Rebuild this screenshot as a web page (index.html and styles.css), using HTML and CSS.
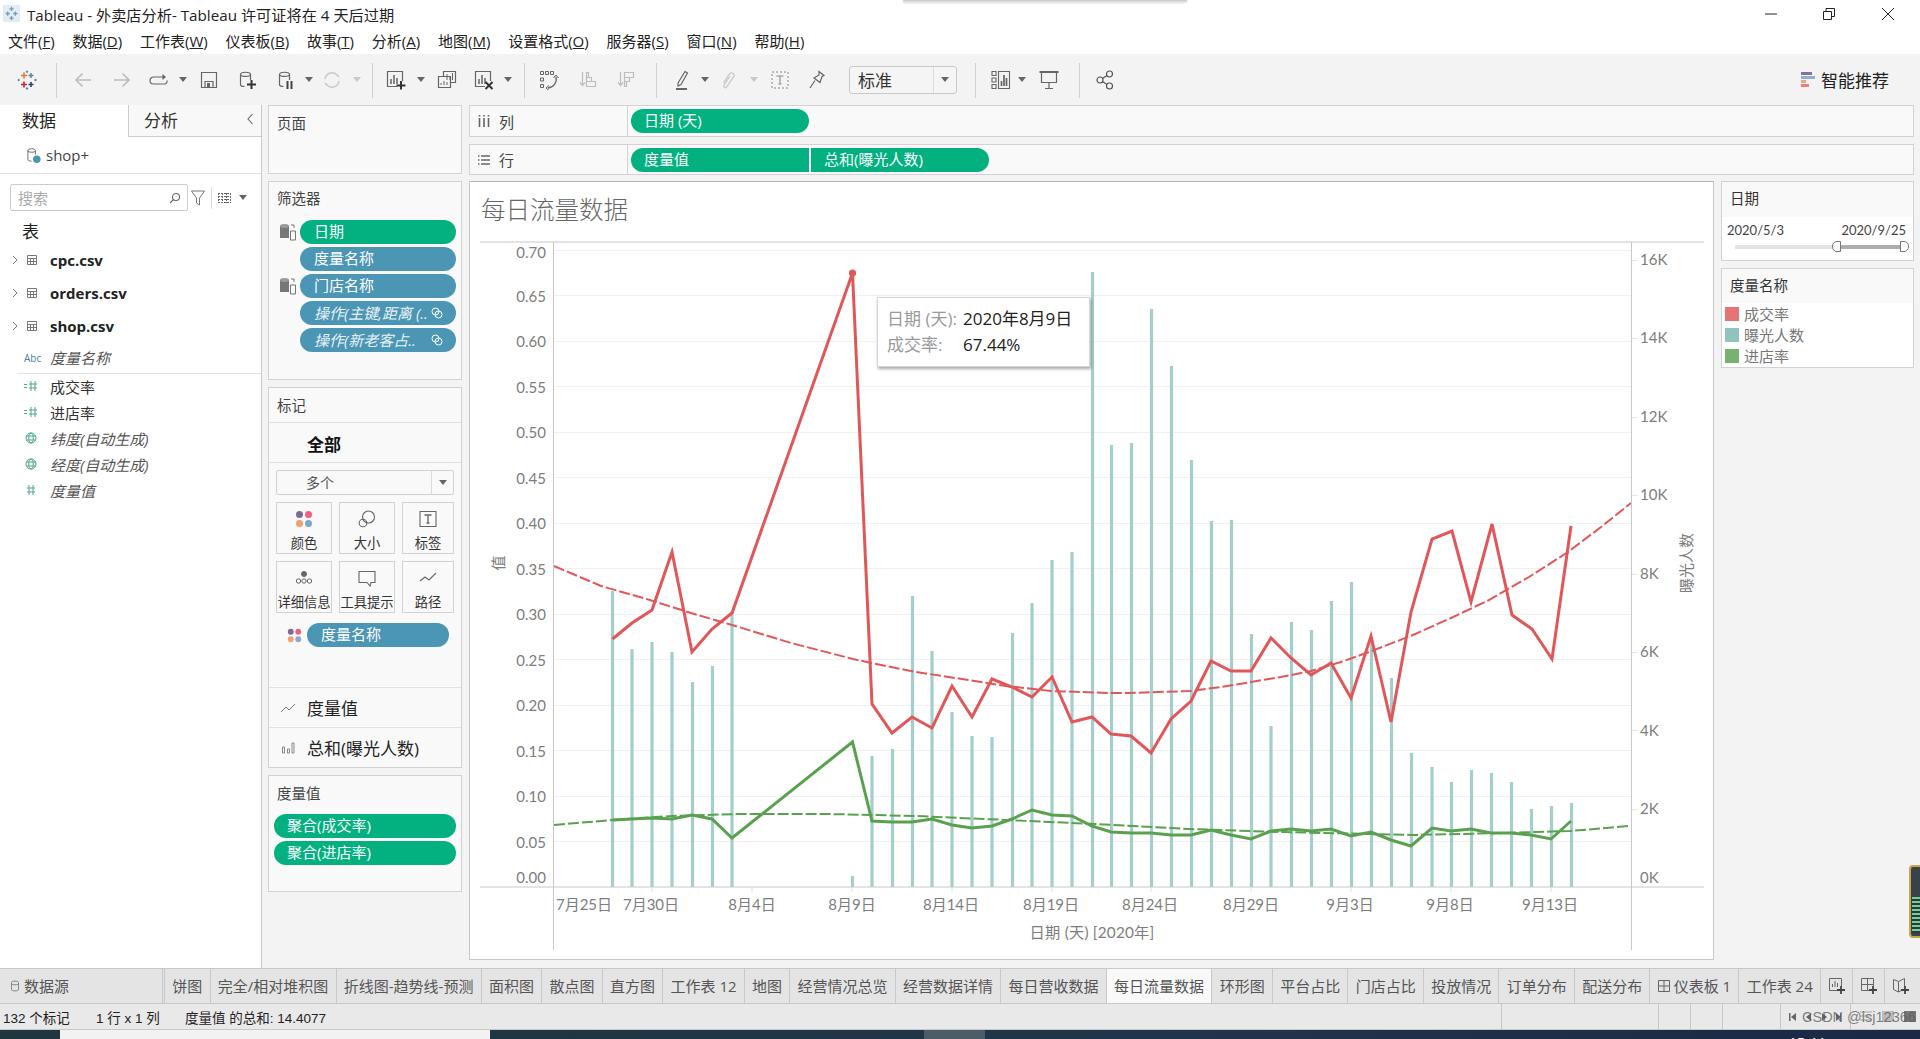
FILE: index.html
```html
<!DOCTYPE html>
<html lang="zh">
<head>
<meta charset="utf-8">
<title>Tableau - 外卖店分析</title>
<link rel="stylesheet" href="styles.css">
</head>
<body>
<div class="app">
  <div class="top-shadow"></div>
  <header class="titlebar">
    <svg class="app-icon" viewBox="0 0 20 20"><rect width="20" height="20" fill="#e3ecf3"/><path d="M10 2v5M7.500 4.500h5M10 13v5M7.500 15.500h5M3 10h5M5.500 7.500v5M12 10h5M14.500 7.500v5" stroke="#6d9cc4" stroke-width="1.500" fill="none"/></svg>
    <span class="title-text">Tableau - 外卖店分析- Tableau 许可证将在 4 天后过期</span>
    <div class="win-btns">
      <svg class="win-min" viewBox="0 0 12 12"><path d="M0 6h12" stroke="#222"/></svg>
      <svg class="win-max" viewBox="0 0 12 12"><path d="M.5 3.500h8v8h-8zM3 3.500V.5h8.500v8H8.500" fill="none" stroke="#222"/></svg>
      <svg class="win-close" viewBox="0 0 12 12"><path d="M0 0l12 12M12 0L0 12" stroke="#222"/></svg>
    </div>
  </header>
  <nav class="menubar">
    <span>文件(<u>F</u>)</span><span>数据(<u>D</u>)</span><span>工作表(<u>W</u>)</span><span>仪表板(<u>B</u>)</span><span>故事(<u>T</u>)</span><span>分析(<u>A</u>)</span><span>地图(<u>M</u>)</span><span>设置格式(<u>O</u>)</span><span>服务器(<u>S</u>)</span><span>窗口(<u>N</u>)</span><span>帮助(<u>H</u>)</span>
  </nav>

  <div class="toolbar">
    <svg class="ti" viewBox="0 0 20 20" fill="none" stroke-width="1.600"><path d="M7 2.500v6M4 5.500h6" stroke="#e8762d"/><path d="M14 3v5M11.500 5.500h5" stroke="#5b879b"/><path d="M7 11.500v6M4 14.500h6" stroke="#c72037"/><path d="M14 12v5M11.500 14.500h5" stroke="#1f447a"/><path d="M10 .5v2.500M8.800 1.700h2.400M10 17v3M8.800 18.500h2.400M1.500 8.800v2.400M.5 10h2.500M18.500 8.800v2.400M17 10h3" stroke="#5b879b" stroke-width="1"/></svg>
    <i class="sep"></i>
    <svg class="ti" viewBox="0 0 20 20" fill="none" stroke="#bdbdbd" stroke-width="1.700"><path d="M18 10H3M9.500 3.500L3 10l6.500 6.500"/></svg>
    <svg class="ti" viewBox="0 0 20 20" fill="none" stroke="#bdbdbd" stroke-width="1.700"><path d="M2 10h15M10.500 3.500L17 10l-6.500 6.500"/></svg>
    <svg class="ti" viewBox="0 0 20 20" fill="none" stroke="#666" stroke-width="1.200"><path d="M15 7H4.500a3.200 3.200 0 0 0 0 7h11a2.800 2.800 0 0 0 2.500-3.500"/><path d="M13.500 4l3.500 3-3.500 3z" fill="#666" stroke="none"/></svg>
    <i class="caret"></i>
    <svg class="ti" viewBox="0 0 20 20" fill="none" stroke="#666" stroke-width="1.200"><path d="M2.500 2.500h15v15h-15z"/><path d="M6 17V11.500h8V17" /><path d="M8 13h3v4H8z" fill="#666" stroke="none"/></svg>
    <svg class="ti" viewBox="0 0 20 20" fill="none" stroke="#666" stroke-width="1.200"><path d="M3.500 4.500c0-3 10-3 10 0V10M3.500 4.500v10c0 1.500 2 2 4 2M3.500 4.500c0 2.500 10 2.500 10 0"/><path d="M14.500 10v9M10 14.500h9" stroke="#333" stroke-width="2"/></svg>
    <svg class="ti" viewBox="0 0 20 20" fill="none" stroke="#666" stroke-width="1.200"><path d="M3.500 4.500c0-3 10-3 10 0V10M3.500 4.500v10c0 1.500 2 2 4 2M3.500 4.500c0 2.500 10 2.500 10 0"/><path d="M11.500 11v8M15.500 11v8" stroke="#444" stroke-width="2"/></svg>
    <i class="caret"></i>
    <svg class="ti" viewBox="0 0 20 20" fill="none" stroke="#c9c9c9" stroke-width="1.500"><path d="M3 9a7 7 0 0 1 12-4l2 2M17 11a7 7 0 0 1-12 4l-2-2"/></svg>
    <i class="caret pale"></i>
    <i class="sep"></i>
    <svg class="ti" viewBox="0 0 20 20" fill="none" stroke="#666" stroke-width="1.200"><path d="M11 16.500H1.500v-15h15V11"/><path d="M5 14V9M8 14V5M11 14V8" stroke-width="1.500"/><path d="M15 11v8.500M10.500 15.500h9" stroke="#333" stroke-width="2"/></svg>
    <i class="caret"></i>
    <svg class="ti" viewBox="0 0 20 20" fill="none" stroke="#666" stroke-width="1.200"><path d="M6.500 6V1.500h12v11H14"/><path d="M1.500 6.500h12v11h-12z" fill="#f3f3f3"/><path d="M4 15v-2M7 15v-4M10 15v-3M10 10V4M13 10V6M15.500 10V3" stroke-width="1"/></svg>
    <svg class="ti" viewBox="0 0 20 20" fill="none" stroke="#666" stroke-width="1.200"><path d="M11 16.500H1.500v-15h15V11"/><path d="M5 14V9M8 14V5M11 14V8" stroke-width="1.500"/><path d="M11.500 12l7 7M18.500 12l-7 7" stroke="#333" stroke-width="2"/></svg>
    <i class="caret"></i>
    <i class="sep"></i>
    <svg class="ti" viewBox="0 0 20 20" fill="none" stroke="#666" stroke-width="1"><path d="M1.500 1.500h3v3h-3zM6.500 1.500h3v3h-3zM11.500 1.500h3v3h-3zM1.500 8h3v3h-3zM1.500 14.500h3v3h-3z"/><path d="M17 7a9 9 0 0 1-8 11" stroke-width="1.300"/><path d="M14.500 8L17 5l2.500 3M10 15.500L7 18l3 2.500"/></svg>
    <svg class="ti" viewBox="0 0 20 20" fill="none" stroke="#bdbdbd" stroke-width="1.200"><path d="M3.500 2v13M1 12.500l2.500 3 2.500-3M7.500 2.500h2v5h-2zM7.500 7.500h5v4h-5zM7.500 11.500h9v5h-9z"/></svg>
    <svg class="ti" viewBox="0 0 20 20" fill="none" stroke="#bdbdbd" stroke-width="1.200"><path d="M3.500 2v13M1 12.500l2.500 3 2.500-3M7.500 2.500h9v5h-9zM7.500 7.500h5v4h-5zM7.500 11.500h2v5h-2z"/></svg>
    <i class="sep"></i>
    <svg class="ti" viewBox="0 0 20 20" fill="none" stroke="#666" stroke-width="1.200"><path d="M5 13L12 1.500l2.500 1.500L8 14.500l-3 1.500z"/><path d="M3 19h11" stroke-width="2"/></svg>
    <i class="caret"></i>
    <svg class="ti" viewBox="0 0 20 20" fill="none" stroke="#c9c9c9" stroke-width="1.300"><path d="M4.500 13l6-9a2.500 2.500 0 0 1 4 3l-7 10a1.500 1.500 0 0 1-2.500-2l6-9"/></svg>
    <i class="caret pale"></i>
    <svg class="ti" viewBox="0 0 20 20" fill="none" stroke="#888" stroke-width="1"><path d="M2 2h16v16H2z" stroke-dasharray="2 2"/><path d="M6.500 6h7M10 6v8M8.500 14h3"/></svg>
    <svg class="ti" viewBox="0 0 20 20" fill="none" stroke="#666" stroke-width="1.200"><path d="M12 1.500l5 4-2 1-2 6-6-4.500 5-3zM8 10.500L3 18"/></svg>
    <div class="fit-select"><span>标准</span><b><i class="caret"></i></b></div>
    <i class="sep"></i>
    <svg class="ti" viewBox="0 0 20 20" fill="none" stroke="#666" stroke-width="1.100"><path d="M1 1.500h4v4H1zM1 8h4v4H1zM1 14.500h4v4H1zM7.500 1.500h11v17h-11z"/><path d="M10.500 16V11M13 16V5M15.500 16V8" stroke-width="1.700"/></svg>
    <i class="caret"></i>
    <svg class="ti" viewBox="0 0 20 20" fill="none" stroke="#666" stroke-width="1.200"><path d="M.5 2h19" stroke-width="2"/><path d="M2.500 2v10.500h15V2M10 12.500V18M6 18.500h8"/></svg>
    <i class="sep"></i>
    <svg class="ti" viewBox="0 0 20 20" fill="none" stroke="#555" stroke-width="1.200"><circle cx="5" cy="10" r="3"/><circle cx="14.500" cy="4" r="3"/><circle cx="14.500" cy="16" r="3"/><path d="M7.500 8.500l4.500-3M7.500 11.500l4.500 3"/></svg>
    <span class="spacer"></span>
    <div class="smart">
      <svg class="smart-ic" viewBox="0 0 14 15"><rect width="11" height="3" fill="#8a6f9e"/><rect y="4" width="14" height="3" fill="#8fb0d6"/><rect y="8" width="5" height="3" fill="#f2a67e"/><rect y="12" width="8" height="3" fill="#f47b84"/></svg>
      <span>智能推荐</span>
    </div>
  </div>

  <main class="main">
    <aside class="data-pane">
      <div class="pane-tabs"><div class="pane-tab active">数据</div><div class="pane-tab">分析<svg class="chev" viewBox="0 0 8 12"><path d="M6.500 1L2 6l4.500 5" fill="none" stroke="#666" stroke-width="1.100"/></svg></div></div>
      <div class="source">
        <svg class="src-ic" viewBox="0 0 16 18" fill="none"><path d="M2 4c0-3 8-3 8 0v4M2 4v9c0 1.500 2 2 4 2M2 4c0 2 8 2 8 0" stroke="#666"/><circle cx="11.500" cy="13" r="4" fill="#4b96b4"/></svg>
        <span>shop+</span>
      </div>
      <div class="search-row">
        <div class="search"><span>搜索</span><svg class="mag" viewBox="0 0 12 12" fill="none" stroke="#666" stroke-width="1.100"><circle cx="7" cy="5" r="3.500"/><path d="M4.500 7.500L1 11"/></svg></div>
        <svg class="funnel" viewBox="0 0 14 16" fill="none" stroke="#777"><path d="M.5 1h13L8.500 8v7l-3-2V8z"/></svg>
        <i class="vline"></i>
        <svg class="gridic" viewBox="0 0 13 10" fill="none" stroke="#666"><path d="M0 .5h13M0 3.500h13M0 6.500h13M0 9.500h13M.5 0v10M4.500 0v10M8.500 0v10M12.500 0v10" stroke-dasharray="2 1"/></svg>
        <i class="caret"></i>
      </div>
      <div class="tbl-head">表</div>
      <ul class="tables">
        <li><svg class="exp" viewBox="0 0 6 10"><path d="M1 1l4 4-4 4" fill="none" stroke="#777"/></svg><svg class="tic" viewBox="0 0 10 10" fill="none" stroke="#777"><path d="M.5.500h9v9h-9zM.5 3.500h9M.5 6.500h9M3.500 3.500v6M6.500 3.500v6"/></svg><b>cpc.csv</b></li>
        <li><svg class="exp" viewBox="0 0 6 10"><path d="M1 1l4 4-4 4" fill="none" stroke="#777"/></svg><svg class="tic" viewBox="0 0 10 10" fill="none" stroke="#777"><path d="M.5.500h9v9h-9zM.5 3.500h9M.5 6.500h9M3.500 3.500v6M6.500 3.500v6"/></svg><b>orders.csv</b></li>
        <li><svg class="exp" viewBox="0 0 6 10"><path d="M1 1l4 4-4 4" fill="none" stroke="#777"/></svg><svg class="tic" viewBox="0 0 10 10" fill="none" stroke="#777"><path d="M.5.500h9v9h-9zM.5 3.500h9M.5 6.500h9M3.500 3.500v6M6.500 3.500v6"/></svg><b>shop.csv</b></li>
      </ul>
      <div class="field dim-field"><span class="abc">Abc</span><em>度量名称</em></div>
      <div class="field"><svg class="fic" viewBox="0 0 16 12" fill="none" stroke="#4ca78a"><path d="M1 4.500h3M1 7.500h3M8 1v10M12 1v10M6 4h8M6 8h8"/></svg><span>成交率</span></div>
      <div class="field"><svg class="fic" viewBox="0 0 16 12" fill="none" stroke="#4ca78a"><path d="M1 4.500h3M1 7.500h3M8 1v10M12 1v10M6 4h8M6 8h8"/></svg><span>进店率</span></div>
      <div class="field"><svg class="fic" viewBox="0 0 16 12" fill="none" stroke="#4ca78a"><circle cx="8" cy="6" r="5"/><ellipse cx="8" cy="6" rx="2.200" ry="5"/><path d="M3 4h10M3 8h10"/></svg><em>纬度(自动生成)</em></div>
      <div class="field"><svg class="fic" viewBox="0 0 16 12" fill="none" stroke="#4ca78a"><circle cx="8" cy="6" r="5"/><ellipse cx="8" cy="6" rx="2.200" ry="5"/><path d="M3 4h10M3 8h10"/></svg><em>经度(自动生成)</em></div>
      <div class="field"><svg class="fic" viewBox="0 0 16 12" fill="none" stroke="#4ca78a"><path d="M6 1v10M10 1v10M4 4h8M4 8h8"/></svg><em>度量值</em></div>
    </aside>

    <section class="side">
      <div class="card pages"><h4>页面</h4></div>
      <div class="card filters">
        <h4>筛选器</h4>
        <div class="filter-row"><svg class="dbi" viewBox="0 0 17 18"><path d="M1 3h9v12H1z" fill="#777"/><ellipse cx="5.500" cy="3" rx="4.500" ry="2" fill="#999"/><path d="M11.500 8h5v9h-5z" fill="#f9f9f9" stroke="#777"/><path d="M12 2h3v3" fill="none" stroke="#777"/></svg><div class="pill green">日期</div></div>
        <div class="filter-row"><div class="pill blue">度量名称</div></div>
        <div class="filter-row"><svg class="dbi" viewBox="0 0 17 18"><path d="M1 3h9v12H1z" fill="#777"/><ellipse cx="5.500" cy="3" rx="4.500" ry="2" fill="#999"/><path d="M11.500 8h5v9h-5z" fill="#f9f9f9" stroke="#777"/><path d="M12 2h3v3" fill="none" stroke="#777"/></svg><div class="pill blue">门店名称</div></div>
        <div class="filter-row"><div class="pill blue ital"><em>操作(主键,距离 (..</em><svg class="link" viewBox="0 0 12 12" fill="none" stroke="#fff"><circle cx="4.500" cy="4.500" r="3.500"/><circle cx="7.500" cy="7.500" r="3.500"/></svg></div></div>
        <div class="filter-row"><div class="pill blue ital"><em>操作(新老客占..</em><svg class="link" viewBox="0 0 12 12" fill="none" stroke="#fff"><circle cx="4.500" cy="4.500" r="3.500"/><circle cx="7.500" cy="7.500" r="3.500"/></svg></div></div>
      </div>
      <div class="card marks">
        <h4 class="marks-h">标记</h4>
        <div class="marks-all">全部</div>
        <div class="mark-select"><span>多个</span><b><i class="caret"></i></b></div>
        <div class="mark-btns">
          <div class="mbtn"><svg viewBox="0 0 18 18"><circle cx="4.500" cy="4.500" r="3.500" fill="#7f6a96"/><circle cx="13.500" cy="4.500" r="3.500" fill="#f0607a"/><circle cx="4.500" cy="13.500" r="3.500" fill="#f2a06d"/><circle cx="13.500" cy="13.500" r="3.500" fill="#7fa4d2"/></svg><span>颜色</span></div>
          <div class="mbtn"><svg viewBox="0 0 18 18" fill="none" stroke="#666" stroke-width="1.100"><circle cx="10.500" cy="7" r="6"/><circle cx="5" cy="13" r="3.800"/></svg><span>大小</span></div>
          <div class="mbtn"><svg viewBox="0 0 18 18" fill="none" stroke="#666" stroke-width="1.100"><path d="M1 1.500h16v15H1z"/><path d="M5.500 5h7M9 5v8M7.500 13h3" stroke-width="1.300"/></svg><span>标签</span></div>
          <div class="mbtn"><svg viewBox="0 0 18 18" fill="none" stroke="#666"><circle cx="9" cy="5" r="2.500" fill="#666"/><circle cx="3.500" cy="12" r="2.200"/><circle cx="9" cy="12" r="2.200"/><circle cx="14.500" cy="12" r="2.200"/></svg><span>详细信息</span></div>
          <div class="mbtn"><svg viewBox="0 0 18 18" fill="none" stroke="#666" stroke-width="1.100"><path d="M1 2.500h16v11h-4l-1 3.500-3-3.500H1z"/></svg><span>工具提示</span></div>
          <div class="mbtn"><svg viewBox="0 0 18 18" fill="none" stroke="#666" stroke-width="1.100"><path d="M1 12l5-4 4 3 7-7"/></svg><span>路径</span></div>
        </div>
        <div class="color-row"><svg class="dots" viewBox="0 0 18 18"><circle cx="4.500" cy="4.500" r="3.500" fill="#7f6a96"/><circle cx="13.500" cy="4.500" r="3.500" fill="#f0607a"/><circle cx="4.500" cy="13.500" r="3.500" fill="#f2a06d"/><circle cx="13.500" cy="13.500" r="3.500" fill="#8fa8d0"/></svg><div class="pill blue wide">度量名称</div></div>
        <div class="mark-type first"><svg viewBox="0 0 16 12" fill="none" stroke="#777"><path d="M1 10l5-5 3 3 6-6"/></svg><span>度量值</span></div>
        <div class="mark-type"><svg viewBox="0 0 16 12" fill="none" stroke="#888"><path d="M2.500 5h2v6h-2zM7.500 7h2v4h-2zM12 1h2v10h-2z"/></svg><span>总和(曝光人数)</span></div>
      </div>
      <div class="card values">
        <h4>度量值</h4>
        <div class="pill green val">聚合(成交率)</div>
        <div class="pill green val">聚合(进店率)</div>
      </div>
    </section>

    <section class="work">
      <div class="shelf col-shelf">
        <div class="shelf-label"><svg viewBox="0 0 12 12" fill="none" stroke="#666" stroke-width="1.600"><path d="M1.500 3v9M6 3v9M10.500 3v9M1.500 0v1.500M6 0v1.500M10.500 0v1.500"/></svg><span>列</span></div>
        <div class="pill green shelf-pill">日期 (天)</div>
      </div>
      <div class="shelf row-shelf">
        <div class="shelf-label"><svg viewBox="0 0 12 12" fill="none" stroke="#666" stroke-width="1.400"><path d="M3 2h9M3 6h9M3 10h9M0 2h1.500M0 6h1.500M0 10h1.500"/></svg><span>行</span></div>
        <div class="pill green shelf-pill left">度量值</div>
        <div class="pill green shelf-pill right">总和(曝光人数)</div>
      </div>
      <div class="canvas">
        <div class="sheet">
          <h1 class="sheet-title">每日流量数据</h1>
          <svg class="plot" viewBox="469 242 1243 717">
            <g class="grid">
              <path d="M553 250.500H1630M553 295.500H1630M553 341.500H1630M553 386.500H1630M553 432.500H1630M553 477.500H1630M553 523.500H1630M553 568.500H1630M553 614.500H1630M553 659.500H1630M553 705.500H1630M553 750.500H1630M553 796.500H1630M553 841.500H1630"/>
            </g>
            <path class="ticks" d="M1630 260.500h6M1630 338.500h6M1630 417.500h6M1630 495.500h6M1630 574.500h6M1630 652.500h6M1630 730.500h6M1630 809.500h6M651 887v5M751 887v5M851 887v5M951 887v5M1051 887v5M1150 887v5M1250 887v5M1350 887v5M1450 887v5M1550 887v5"/>
            <path class="bars" d="M611.500 887V591M631 887V649M651 887V642M671 887V652M691.500 887V682M711.500 887V666M731 887V612M851.500 887V876M871 887V756M891.500 887V749M911.500 887V596M931 887V651M951 887V712M971 887V736M991 887V737M1011.500 887V633M1031 887V603M1051 887V560M1071 887V552M1091.500 887V272M1110.500 887V445M1130.500 887V443M1150.500 887V309M1170.500 887V366M1190.500 887V460M1210.500 887V521M1230.500 887V520M1250.500 887V634M1270 887V726M1290.500 887V622M1310.500 887V630M1330.500 887V601M1350.500 887V582M1370.500 887V640M1390.500 887V678M1410.500 887V753M1431 887V767M1450.500 887V782M1470.500 887V770M1490.500 887V773M1510.500 887V782M1530.500 887V809M1550.500 887V806M1570.500 887V803"/>
            <polyline class="trend red" points="553,566 600,586 649,600 690,613 731,625 790,643 852,659 870,663 915,672 961,679 1005,686 1050,691 1108,693 1127,693 1189,691 1220,687 1250,682 1280,677 1310,671 1340,662 1368,652 1412,635 1450,618 1488,600 1528,577 1567,552 1600,527 1630,503"/>
            <polyline class="trend green" points="553,825 611,820 671,816 738,814 827,814 916,816 1006,820 1095,824 1170,828 1189,829 1278,832 1368,834 1412,835 1502,833 1569,831 1628,826"/>
            <polyline class="series red" points="611.500,639 631,623 651,610 671,552 691,652 711,629 731,613 851.500,273 871,704 891,733 911,717 931,728 951,686 971,717 991,679 1011,687 1031,697 1051,677 1071,722 1091,717 1110,734 1130,736 1150,753 1170,719 1190,701 1210,661 1230,671 1250,671 1270,638 1290,658 1310,675 1330,663 1350,698 1370,636 1390,722 1410,612 1431,539 1451,531 1470,602 1491,524 1511,615 1531,629 1551,659 1570,526"/>
            <polyline class="series green" points="611.500,820 631,819 651,818 671,819 691,815 711,819 731,838 851.500,742 871,821 891,822 911,822 931,819 951,825 971,828 991,826 1011,819 1031,810 1051,815 1071,816 1091,826 1110,832 1130,833 1150,833 1170,835 1190,835 1210,830 1230,835 1250,839 1270,831 1290,829 1310,831 1330,829 1350,836 1370,832 1390,840 1410,846 1431,828 1450,831 1470,829 1490,833 1510,833 1530,835 1550,839 1570,821"/>
            <circle class="peak" cx="851.500" cy="273" r="3.600"/>
            <path class="axis" d="M479 242H1703M479 887H1703M552.500 242V950M1630.500 242V950"/>
            <g class="labels end">
              <text x="545" y="258">0.70</text><text x="545" y="302">0.65</text><text x="545" y="347">0.60</text><text x="545" y="393">0.55</text><text x="545" y="438">0.50</text><text x="545" y="484">0.45</text><text x="545" y="529">0.40</text><text x="545" y="575">0.35</text><text x="545" y="620">0.30</text><text x="545" y="666">0.25</text><text x="545" y="711">0.20</text><text x="545" y="757">0.15</text><text x="545" y="802">0.10</text><text x="545" y="848">0.05</text><text x="545" y="883">0.00</text>
            </g>
            <g class="labels">
              <text x="1639" y="265">16K</text><text x="1639" y="343">14K</text><text x="1639" y="422">12K</text><text x="1639" y="500">10K</text><text x="1639" y="579">8K</text><text x="1639" y="657">6K</text><text x="1639" y="736">4K</text><text x="1639" y="814">2K</text><text x="1639" y="883">0K</text>
            </g>
            <g class="labels mid">
              <text x="583" y="910">7月25日</text><text x="650" y="910">7月30日</text><text x="751" y="910">8月4日</text><text x="851" y="910">8月9日</text><text x="950" y="910">8月14日</text><text x="1050" y="910">8月19日</text><text x="1149" y="910">8月24日</text><text x="1250" y="910">8月29日</text><text x="1349" y="910">9月3日</text><text x="1449" y="910">9月8日</text><text x="1549" y="910">9月13日</text>
              <text class="ax-title" x="1091" y="938">日期 (天) [2020年]</text>
              <text x="0" y="0" transform="translate(503 563) rotate(-90)">值</text>
              <text x="0" y="0" transform="translate(1691 563) rotate(-90)">曝光人数</text>
            </g>
          </svg>
          <div class="tooltip">
            <div><span class="tk">日期 (天):</span><span class="tv">2020年8月9日</span></div>
            <div><span class="tk">成交率:</span><span class="tv">67.44%</span></div>
          </div>
        </div>
        <div class="legends">
          <div class="legend date-card">
            <h4>日期</h4>
            <div class="date-vals"><span>2020/5/3</span><span>2020/9/25</span></div>
            <div class="slider"><i class="fill"></i><i class="thumb t1"></i><i class="thumb t2"></i></div>
          </div>
          <div class="legend name-card">
            <h4>度量名称</h4>
            <div class="lg-item"><i class="sw s-red"></i><span>成交率</span></div>
            <div class="lg-item"><i class="sw s-teal"></i><span>曝光人数</span></div>
            <div class="lg-item"><i class="sw s-green"></i><span>进店率</span></div>
          </div>
        </div>
      </div>
    </section>
  </main>

  <div class="tabs">
    <div class="tab source-tab"><svg viewBox="0 0 9 13" fill="none" stroke="#777"><path d="M.5 2.500c0-2 8-2 8 0v8c0 2-8 2-8 0zM.5 4c0 1.500 8 1.500 8 0"/></svg>数据源</div>
    <div class="tab">饼图</div><div class="tab">完全/相对堆积图</div><div class="tab">折线图-趋势线-预测</div><div class="tab">面积图</div><div class="tab">散点图</div><div class="tab">直方图</div><div class="tab">工作表 12</div><div class="tab">地图</div><div class="tab">经营情况总览</div><div class="tab">经营数据详情</div><div class="tab">每日营收数据</div><div class="tab active">每日流量数据</div><div class="tab">环形图</div><div class="tab">平台占比</div><div class="tab">门店占比</div><div class="tab">投放情况</div><div class="tab">订单分布</div><div class="tab">配送分布</div>
    <div class="tab"><svg class="dash" viewBox="0 0 12 12" fill="none" stroke="#666"><path d="M.5.500h11v11H.5zM6 .5v11M.5 6h11"/></svg>仪表板 1</div>
    <div class="tab">工作表 24</div>
    <div class="tab-add"><svg viewBox="0 0 16 16" fill="none" stroke="#666"><path d="M9 12.500H.5V.5h12V8M3.500 9V6M6 9V3M8.500 9V5"/><path d="M12 8v8M8 12h8" stroke="#444" stroke-width="1.800"/></svg></div>
    <div class="tab-add"><svg viewBox="0 0 16 16" fill="none" stroke="#666"><path d="M9 12.500H.5V.5h12V8M6.500.5v12M.5 6.500h12"/><path d="M12 8v8M8 12h8" stroke="#444" stroke-width="1.800"/></svg></div>
    <div class="tab-add"><svg viewBox="0 0 16 16" fill="none" stroke="#666"><path d="M.5 1.500l5 2 6-3V8M5.500 3.500V14M.5 1.500v10l5 2.500 3-1.500"/><path d="M12 8v8M8 12h8" stroke="#444" stroke-width="1.800"/></svg></div>
  </div>

  <footer class="status">
    <span class="s1">132 个标记</span><span class="s2">1 行 x 1 列</span><span class="s3">度量值 的总和: 14.4077</span>
    <div class="st-right">
      <i class="cell c1"></i><i class="cell c2"></i><i class="cell c2"></i><i class="cell c3"></i>
      <div class="cell nav"><svg viewBox="0 0 52 10" fill="#666"><path d="M0 1h1.500v8H0zM7 1v8L2 5zM22 1v8l-5-4zM33 1v8l5-4zM47 1v8l5-4z"/><path d="M51 1h1v8h-1z"/></svg></div>
      <div class="cell views"><i class="v1"></i><i class="v2"></i><i class="v3"></i></div>
    </div>
    <span class="watermark">CSDN @lsj12366</span>
  </footer>
  <div class="taskbar"><i class="tk-app"></i><i class="tk-sel"></i><span class="clock">15:44</span></div>
  <div class="gadget"><i></i></div>
</div>
</body>
</html>
```

FILE: styles.css
```css
* { box-sizing: border-box; }
html, body { margin: 0; height: 100%; }
body { font-family: "Open Sans", "Noto Sans CJK SC", sans-serif; color: #333; overflow: hidden; }
.app { position: relative; width: 1920px; height: 1039px; background: #f3f3f3; display: flex; flex-direction: column; overflow: hidden; }
h1, h4 { margin: 0; font-weight: 400; }

.top-shadow { position: absolute; left: 903px; top: 0; width: 284px; height: 1px; background: #ccc; box-shadow: 0 1px 3px #888; z-index: 2; }

.titlebar { height: 30px; background: #fff; display: flex; align-items: center; padding: 0 0 3px 3px; flex: none; }
.app-icon { width: 17px; height: 17px; margin-right: 7px; }
.title-text { font-size: 15.200px; color: #222; white-space: nowrap; }
.win-btns { margin-left: auto; display: flex; align-items: center; }
.win-btns svg { width: 12px; height: 12px; }
.win-min { margin-right: 46px; }
.win-max { margin-right: 47px; }
.win-close { margin-right: 26px; }

.menubar { height: 24px; background: #fff; display: flex; gap: 17.800px; padding: 0 0 2px 8px; font-size: 15px; line-height: 22px; color: #222; flex: none; white-space: nowrap; }

.toolbar { height: 51px; flex: none; display: grid; align-items: center; padding-left: 27px; background: #f3f3f3;
  grid-template-columns: 29px 27px 39px 37px 24px 26px 38px 39px 23px 23px 25px 15px 24px 25px 25.500px 37.500px 24px 16px 25px 40px 37.500px 29.500px 27px 21.500px 24.500px 24.500px 26.500px 37px 32px 126px 26px 21px 27px 30px 25.500px 20px 1fr auto; }
.ti { width: 20px; height: 20px; margin-left: -10px; display: block; }
.sep { display: block; width: 1px; height: 35px; background: #cfcfcf; margin-top: 1px; }
.caret { display: block; width: 0; height: 0; border: 4px solid transparent; border-top: 5px solid #666; border-bottom: 0; margin-left: -4px; }
.caret.pale { border-top-color: #c9c9c9; }
.fit-select { width: 108px; height: 28px; border: 1px solid #c9c9c9; border-radius: 3px; display: flex; background: #f5f5f5; }
.fit-select span { flex: 1; font-size: 17px; line-height: 28px; padding-left: 8px; color: #333; }
.fit-select b { width: 23px; border-left: 1px solid #dcdcdc; display: flex; align-items: center; justify-content: center; }
.fit-select .caret { margin-left: 0; }
.spacer { display: block; }
.smart { display: flex; align-items: center; gap: 6px; padding-right: 31px; font-size: 17px; color: #222; }
.smart-ic { width: 14px; height: 15px; }

.main { height: 863px; flex: none; display: flex; }
.data-pane { width: 262px; flex: none; background: #fff; border-right: 1px solid #c8c8c8; }
.pane-tabs { display: flex; height: 32px; font-size: 17px; }
.pane-tab { line-height: 31px; position: relative; flex: 1; padding-left: 15px; background: #f8f8f8; border-bottom: 1px solid #ccc; border-left: 1px solid #ccc; color: #333; }
.pane-tab.active { flex: none; width: 128px; padding-left: 22px; background: #fff; border: 0; color: #222; }
.chev { position: absolute; right: 7px; top: 8px; width: 8px; height: 12px; }
.source { height: 37px; display: flex; align-items: center; padding-left: 26px; gap: 5px; font-size: 15px; color: #444; border-bottom: 1px solid #e2e2e2; }
.src-ic { width: 15px; height: 17px; }
.search-row { display: flex; align-items: center; padding: 10px 0 0 10px; height: 37px; }
.search { width: 178px; height: 27px; border: 1px solid #ccc; border-radius: 2px; display: flex; align-items: center; padding: 0 6px 0 7px; font-size: 15px; color: #aaa; background: #fff; }
.mag { width: 12px; height: 12px; margin-left: auto; }
.funnel { width: 14px; height: 16px; margin-left: 3px; }
.vline { width: 1px; height: 22px; background: #ddd; margin-left: 6px; }
.gridic { width: 13px; height: 10px; margin: 0 8px 0 6px; }
.search-row .caret { margin-left: 0; }
.tbl-head { font-size: 17px; padding-left: 22px; line-height: 24px; margin-top: 9px; color: #222; }
.tables { list-style: none; margin: -1px 0 0; padding: 0; }
.tables li { height: 33px; display: flex; align-items: center; font-size: 15px; }
.tables b { font-weight: 700; color: #222; }
.exp { width: 6px; height: 10px; margin: 0 9px 0 12px; }
.tic { width: 10px; height: 10px; margin-right: 13px; }
.field { height: 26px; display: flex; align-items: center; font-size: 15px; color: #444; }
.field em { color: #555; }
.field span:not(.abc) { color: #333; }
.dim-field { height: 31px; position: relative; }
.dim-field::after { content: ""; position: absolute; left: 18px; right: 0; bottom: -1px; height: 1px; background: #e2e2e2; }
.abc { width: 50px; padding-left: 24px; font-size: 10px; color: #4b7f9c; }
.fic { width: 16px; height: 12px; margin: 0 11px 0 23px; }

.side { width: 194px; margin-left: 6px; flex: none; display: flex; flex-direction: column; gap: 7px; }
.card { background: #f9f9f9; border: 1px solid #d2d2d2; font-size: 14px; color: #444; }
.card h4 { font-size: 14.500px; padding-left: 8px; color: #444; }
.pages { height: 69px; padding-top: 6px; }
.filters { height: 199px; padding-top: 5px; }
.filters h4 { margin-bottom: 12px; }
.filter-row { display: flex; align-items: center; justify-content: flex-end; margin-bottom: 3px; padding-right: 5px; }
.dbi { width: 17px; height: 18px; margin-right: 4px; }
.pill { height: 24px; line-height: 23px; border-radius: 12px; color: #fff; font-size: 15px; padding-left: 14px; white-space: nowrap; }
.green { background: #02b17f; }
.blue { background: #4b96b4; }
.filter-row .pill { width: 156px; }
.ital { display: flex; align-items: center; justify-content: space-between; padding-right: 13px; color: #e8f2f6; }
.link { width: 12px; height: 12px; flex: none; }

.marks { height: 381px; display: flex; flex-direction: column; }
.marks-h { height: 35px; line-height: 35px; flex: none; border-bottom: 1px solid #e2e2e2; }
.marks-all { height: 40px; line-height: 43px; font-size: 17px; font-weight: 700; color: #111; padding-left: 38px; border-bottom: 1px solid #e2e2e2; flex: none; }
.mark-select { margin: 7px; height: 25px; flex: none; display: flex; border: 1px solid #d2d2d2; border-radius: 2px; background: #f9f9f9; }
.mark-select span { flex: 1; text-align: center; padding-right: 68px; line-height: 23px; font-size: 14px; color: #555; }
.mark-select b { width: 22px; border-left: 1px solid #dcdcdc; display: flex; align-items: center; justify-content: center; }
.mark-select .caret { margin-left: 0; }
.mark-btns { margin: 0 7px; display: grid; grid-template-columns: 56px 56px 52px; gap: 7px; flex: none; }
.mbtn { height: 52px; border: 1px solid #d2d2d2; background: #f9f9f9; display: flex; flex-direction: column; align-items: center; justify-content: space-between; padding: 7px 0 1px; font-size: 13.300px; line-height: 18px; color: #333; white-space: nowrap; }
.mbtn svg { width: 18px; height: 18px; }
.color-row { display: flex; align-items: center; justify-content: flex-end; padding-right: 12px; margin-top: 10px; flex: none; }
.dots { width: 15px; height: 15px; margin-right: 5px; }
.pill.wide { width: 142px; }
.mark-type { height: 40px; display: flex; align-items: center; padding-left: 11px; font-size: 17px; color: #222; border-top: 1px solid #e2e2e2; flex: none; }
.mark-type.first { margin-top: auto; }
.mark-type svg { width: 16px; height: 12px; margin-right: 11px; }

.values { height: 117px; padding-top: 6px; }
.values h4 { margin-bottom: 11px; }
.pill.val { width: 182px; margin: 0 0 3px 5px; padding-left: 13px; }

.work { margin-left: 7px; width: 1445px; flex: none; display: flex; flex-direction: column; }
.shelf { display: flex; align-items: center; background: #f9f9f9; border: 1px solid #d2d2d2; }
.col-shelf { height: 32px; }
.row-shelf { height: 31px; margin-top: 7px; }
.shelf-label { width: 158px; align-self: stretch; border-right: 1px solid #d2d2d2; margin-right: 3px; display: flex; align-items: center; padding-left: 8px; gap: 9px; font-size: 15px; color: #444; flex: none; }
.shelf-label svg { width: 12px; height: 12px; }
.shelf-pill { width: 178px; padding-left: 13px; }
.shelf-pill.left { border-radius: 12px 0 0 12px; margin-right: 2px; }
.shelf-pill.right { border-radius: 0 12px 12px 0; }

.canvas { display: flex; gap: 7px; margin-top: 6px; height: 779px; }
.sheet { position: relative; width: 1245px; background: #fff; border: 1px solid #c8c8c8; border-top: 1px solid #b4b4b4; flex: none; }
.sheet-title { height: 60px; font-size: 24.500px; line-height: 56px; padding-left: 11px; color: #666; font-weight: 300; }
.plot { display: block; width: 1243px; height: 717px; overflow: visible; }
.grid path { stroke: #f0f0f0; stroke-width: 1; fill: none; }
.ticks { stroke: #e4e4e4; fill: none; }
.bars { stroke: #a3cecb; stroke-width: 3.200; fill: none; }
.axis { stroke: #c8c8c8; stroke-width: 1; fill: none; }
.trend { fill: none; stroke-width: 2; stroke-dasharray: 11 3; }
.series { fill: none; stroke-width: 3; stroke-linejoin: miter; }
.red { stroke: #e15759; }
.green.trend, .green.series { stroke: #59a14f; background: none; }
.peak { fill: #e15759; }
.labels text { font-family: "Lato", "Noto Sans CJK SC", sans-serif; font-size: 15px; fill: #7d7d7d; }
.labels.end text { text-anchor: end; }
.labels.mid text { text-anchor: middle; }
.labels .ax-title { font-size: 15.300px; letter-spacing: .2px; }

.tooltip { position: absolute; left: 407px; top: 115px; width: 213px; height: 70px; background: #fff; border: 1px solid #d6d6d6; box-shadow: 1px 2px 3px rgba(0,0,0,.35); padding: 8px 0 0 9px; font-size: 17px; line-height: 26px; white-space: nowrap; }
.tk { display: inline-block; width: 76px; color: #9a9a9a; }
.tv { color: #222; }

.legends { width: 193px; flex: none; display: flex; flex-direction: column; gap: 7px; }
.legend { background: #fff; border: 1px solid #d2d2d2; }
.legend h4 { background: #f9f9f9; height: 35px; line-height: 33px; font-size: 14.500px; padding-left: 8px; color: #333; }
.date-card { height: 80px; }
.date-vals { display: flex; justify-content: space-between; padding: 3px 7px 0 5px; font-family: "Lato", sans-serif; font-size: 13px; line-height: 20px; color: #444; }
.slider { position: relative; height: 4px; margin: 5px 12px 0 13px; background: #e4e4e4; }
.fill { position: absolute; right: 0; top: 0; width: 66px; height: 4px; background: #adadad; }
.thumb { position: absolute; top: -4px; width: 9px; height: 11px; border: 1px solid #777; background: #fff; }
.t1 { left: 97px; border-radius: 5px 0 0 5px; }
.t2 { right: -8px; border-radius: 0 5px 5px 0; }
.name-card { height: 100px; }
.name-card h4 { height: 34px; }
.lg-item { display: flex; align-items: center; height: 21px; font-size: 15px; color: #777; padding-left: 3px; gap: 5px; }
.sw { width: 14px; height: 14px; display: block; flex: none; }
.s-red { background: #e57575; }
.s-teal { background: #8fc4be; }
.s-green { background: #78b26e; }

.tabs { height: 36px; flex: none; background: #e4e4e4; border-top: 1px solid #c8c8c8; border-bottom: 1px solid #c8c8c8; display: flex; font-size: 15px; color: #555; white-space: nowrap; }
.tab { padding: 0 7.250px; border-right: 1px solid #c8c8c8; line-height: 34px; display: flex; align-items: center; gap: 4px; }
.tab.active { background: #f9f9f9; }
.source-tab { width: 165px; padding-left: 11px; gap: 5px; border-right: 3px double #c8c8c8; }
.source-tab svg { width: 8px; height: 12px; }
.dash { width: 12px; height: 12px; }
.tab-add { width: 32px; border-right: 1px solid #c8c8c8; display: flex; align-items: center; justify-content: center; }
.tab-add svg { width: 16px; height: 16px; }
.tab-add:last-child { border-right: 0; }

.status { height: 26px; flex: none; position: relative; background: #e9e9e9; border-bottom: 1px solid #c8c8c8; display: flex; align-items: center; font-family: "Liberation Sans", "Noto Sans CJK SC", sans-serif; font-size: 13.500px; color: #222; white-space: nowrap; }
.s1 { width: 96px; padding-left: 3px; }
.s2 { width: 89px; }
.st-right { position: absolute; left: 1501px; top: 0; height: 25px; display: flex; }
.cell { display: block; border-left: 1px solid #c8c8c8; height: 25px; }
.c1 { width: 157px; }
.c2 { width: 32px; }
.c3 { width: 58px; }
.nav { width: 70px; display: flex; align-items: center; padding-left: 8px; }
.nav svg { width: 52px; height: 10px; }
.views { width: 70px; display: flex; gap: 10px; padding: 7px 0 0 9px; }
.views i { display: block; width: 12px; height: 11px; }
.v1 { background: repeating-linear-gradient(#c8c8c8 0 2px, #e9e9e9 2px 4px); }
.v2 { background: #bbb; }
.v3 { background: #777; }
.watermark { position: absolute; left: 1802px; top: 5px; font-size: 14.500px; color: rgba(90,90,90,.75); }

.taskbar { height: 9px; flex: none; position: relative; overflow: hidden; background: linear-gradient(90deg, #20363f 0, #21354a 60%, #1b2944 100%); }
.tk-app { position: absolute; left: 60px; top: 0; width: 430px; height: 9px; background: #f2f2f2; }
.tk-sel { position: absolute; left: 924px; top: 0; width: 61px; height: 9px; background: #4d5d67; }
.clock { position: absolute; left: 1789px; top: 6px; font-size: 14px; line-height: 14px; color: #fff; }

.gadget { position: absolute; left: 1909px; top: 865px; width: 14px; height: 73px; border: 2px solid #caa24a; border-radius: 4px; background: #38424a; }
.gadget i { display: block; width: 8px; margin: 30px 0 0 1px; height: 36px; background: repeating-linear-gradient(#6fd09a 0 2px, #2c3a40 2px 4px); }
```
